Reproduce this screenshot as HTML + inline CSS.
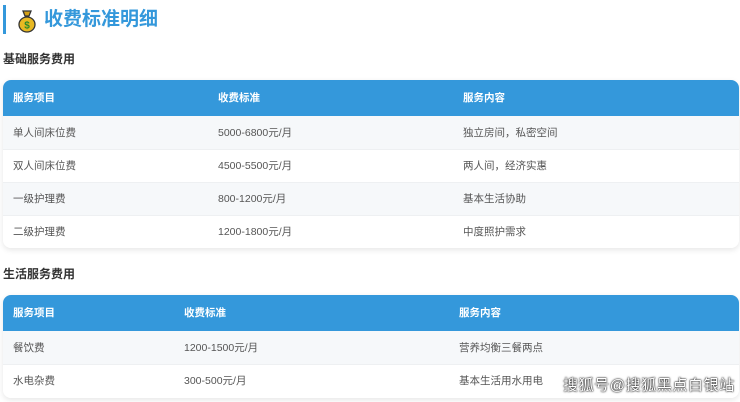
<!DOCTYPE html>
<html><head><meta charset="utf-8"><style>
*{margin:0;padding:0;box-sizing:border-box}
body{width:740px;height:402px;background:#fff;font-family:"Liberation Sans","Noto Sans CJK SC",sans-serif;position:relative;overflow:hidden;color:#444}
.bar{position:absolute;left:3px;top:5px;width:3px;height:29px;background:#3498db}
.title{position:absolute;left:44px;top:6px;font-size:19px;font-weight:bold;color:#3498db;line-height:28px}
.h{position:absolute;left:3px;font-size:12px;font-weight:bold;color:#333}
.t{position:absolute;left:3px;width:736px;border-radius:8px;overflow:hidden;box-shadow:0 2px 6px rgba(0,0,0,.1)}
.r{position:relative;height:33px;font-size:10.5px;line-height:33px;color:#555}
.r span{position:absolute;top:0}
.hd{background:#3498db;color:#fff;font-weight:bold;height:36px;line-height:36px}
.g{background:#f6f8fa;border-bottom:1px solid #eef0f2}
.w{background:#fff;border-bottom:1px solid #eef0f2}
.wm{position:absolute;left:563px;top:374px;font-size:15px;white-space:nowrap;color:#fff;text-shadow:0 0 2px #000,0 0 1px #000;letter-spacing:0.6px}
</style></head><body>
<div class="bar"></div>
<svg style="position:absolute;left:17px;top:9px" width="20" height="24" viewBox="0 0 20 24">
<path d="M6 2 L14 2 L12 7 L8 7 Z" fill="#d4a017" stroke="#333" stroke-width="1.3"/>
<ellipse cx="10" cy="15.5" rx="8" ry="7.5" fill="#e8b923" stroke="#333" stroke-width="1.3"/>
<text x="10" y="19.5" font-size="10" text-anchor="middle" fill="#2a8a2a" font-weight="bold" font-family="Liberation Sans">$</text>
</svg>
<div class="title">收费标准明细</div>
<div class="h" style="top:50px">基础服务费用</div>
<div class="t" style="top:80px">
<div class="r hd"><span style="left:10px">服务项目</span><span style="left:215px">收费标准</span><span style="left:460px">服务内容</span></div>
<div class="r g" style="height:34px;line-height:34px"><span style="left:10px">单人间床位费</span><span style="left:215px">5000-6800元/月</span><span style="left:460px">独立房间，私密空间</span></div>
<div class="r w"><span style="left:10px">双人间床位费</span><span style="left:215px">4500-5500元/月</span><span style="left:460px">两人间，经济实惠</span></div>
<div class="r g"><span style="left:10px">一级护理费</span><span style="left:215px">800-1200元/月</span><span style="left:460px">基本生活协助</span></div>
<div class="r w" style="height:32px;border:0"><span style="left:10px">二级护理费</span><span style="left:215px">1200-1800元/月</span><span style="left:460px">中度照护需求</span></div>
</div>
<div class="h" style="top:265px">生活服务费用</div>
<div class="t" style="top:295px">
<div class="r hd"><span style="left:10px">服务项目</span><span style="left:181px">收费标准</span><span style="left:456px">服务内容</span></div>
<div class="r g" style="height:34px;line-height:34px"><span style="left:10px">餐饮费</span><span style="left:181px">1200-1500元/月</span><span style="left:456px">营养均衡三餐两点</span></div>
<div class="r w" style="border:0"><span style="left:10px">水电杂费</span><span style="left:181px">300-500元/月</span><span style="left:456px">基本生活用水用电</span></div>
</div>
<div class="wm">搜狐号@搜狐黑点白银站</div>
</body></html>
